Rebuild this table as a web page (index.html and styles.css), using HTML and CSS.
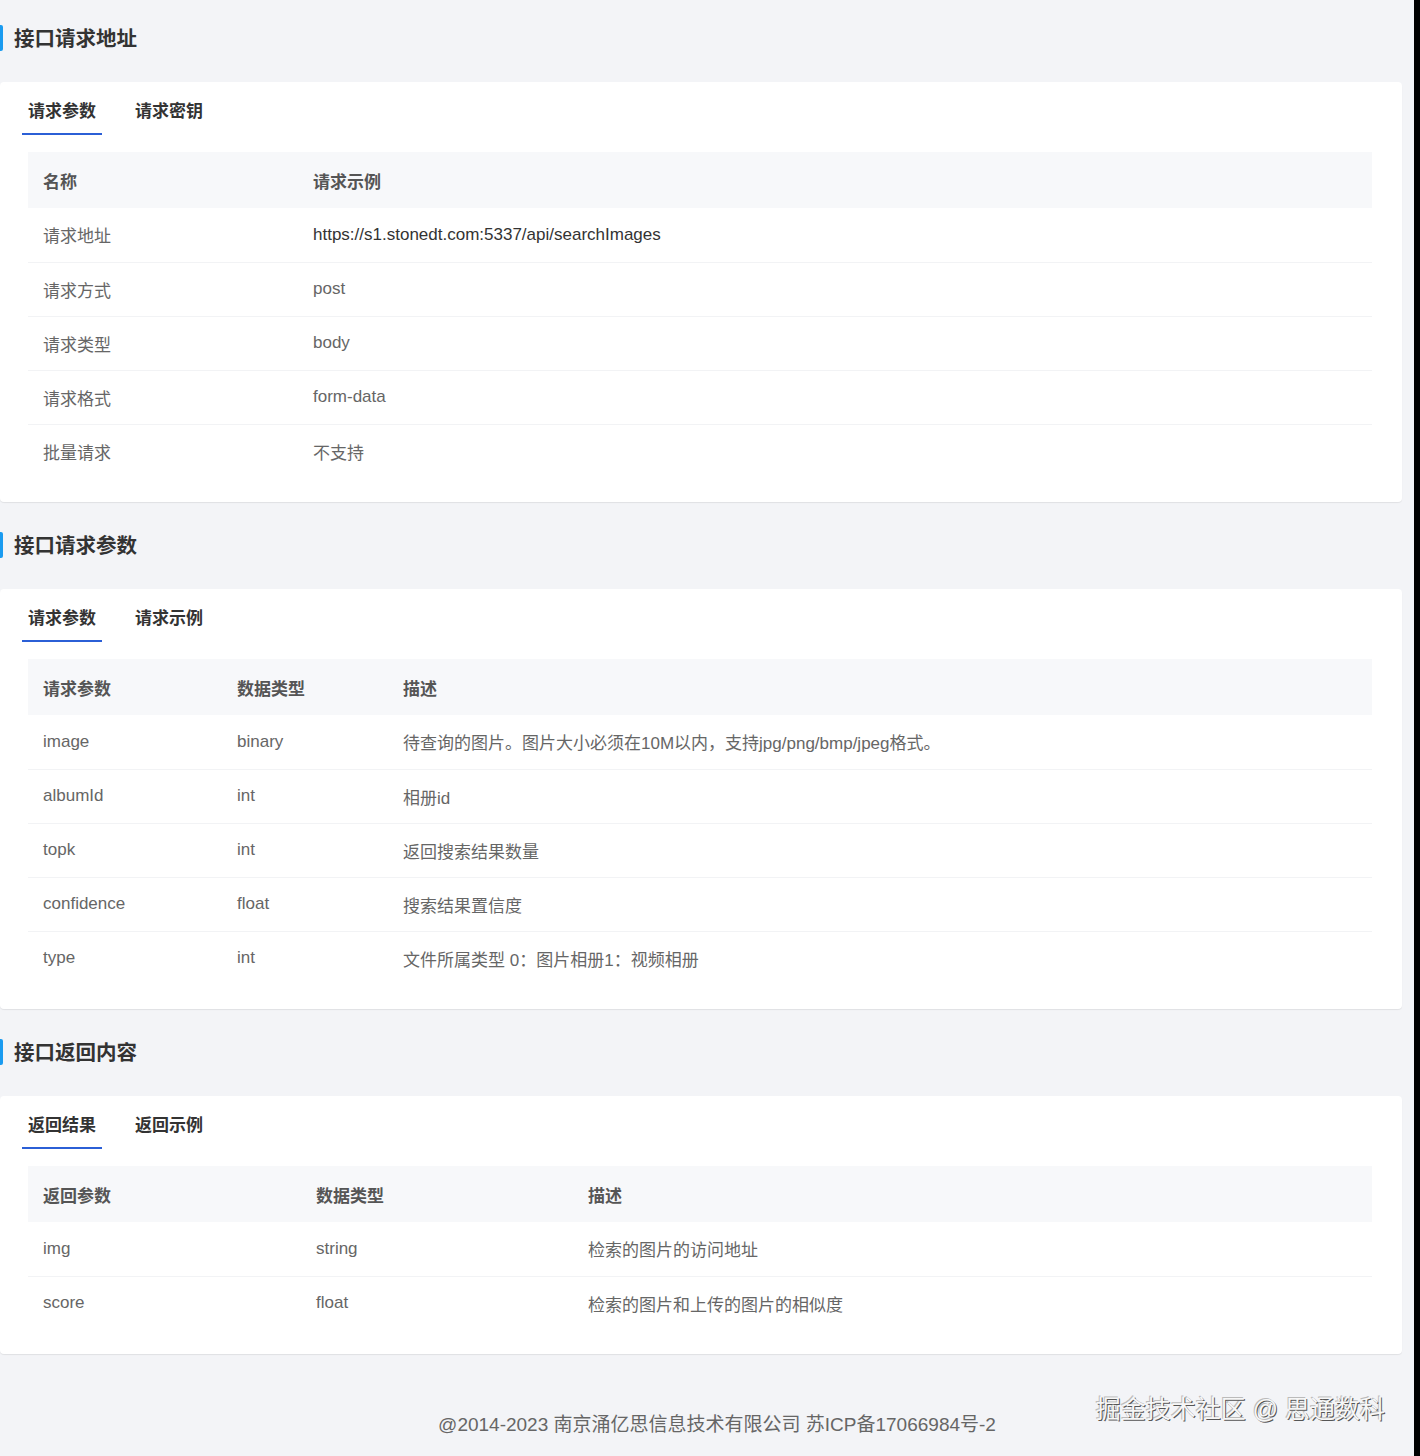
FILE: index.html
```html
<!DOCTYPE html>
<html lang="zh-CN">
<head>
    <meta charset="utf-8">
    <title>接口文档</title>
    <link rel="stylesheet" href="styles.css">
</head>
<body>
    <main class="page">
        <section class="block">
            <h2 class="block-title">接口请求地址</h2>
            <div class="card">
                <div class="tabs">
                    <span class="tab active">请求参数</span>
                    <span class="tab">请求密钥</span>
                </div>
                <table class="table t-addr">
                    <thead>
                        <tr><th>名称</th><th>请求示例</th></tr>
                    </thead>
                    <tbody>
                        <tr><td>请求地址</td><td class="strong">https://s1.stonedt.com:5337/api/searchImages</td></tr>
                        <tr><td>请求方式</td><td>post</td></tr>
                        <tr><td>请求类型</td><td>body</td></tr>
                        <tr><td>请求格式</td><td>form-data</td></tr>
                        <tr><td>批量请求</td><td>不支持</td></tr>
                    </tbody>
                </table>
            </div>
        </section>

        <section class="block">
            <h2 class="block-title">接口请求参数</h2>
            <div class="card">
                <div class="tabs">
                    <span class="tab active">请求参数</span>
                    <span class="tab">请求示例</span>
                </div>
                <table class="table t-params">
                    <thead>
                        <tr><th>请求参数</th><th>数据类型</th><th>描述</th></tr>
                    </thead>
                    <tbody>
                        <tr><td>image</td><td>binary</td><td>待查询的图片。图片大小必须在10M以内，支持jpg/png/bmp/jpeg格式。</td></tr>
                        <tr><td>albumId</td><td>int</td><td>相册id</td></tr>
                        <tr><td>topk</td><td>int</td><td>返回搜索结果数量</td></tr>
                        <tr><td>confidence</td><td>float</td><td>搜索结果置信度</td></tr>
                        <tr><td>type</td><td>int</td><td>文件所属类型 0：图片相册1：视频相册</td></tr>
                    </tbody>
                </table>
            </div>
        </section>

        <section class="block">
            <h2 class="block-title">接口返回内容</h2>
            <div class="card">
                <div class="tabs">
                    <span class="tab active">返回结果</span>
                    <span class="tab">返回示例</span>
                </div>
                <table class="table t-result">
                    <thead>
                        <tr><th>返回参数</th><th>数据类型</th><th>描述</th></tr>
                    </thead>
                    <tbody>
                        <tr><td>img</td><td>string</td><td>检索的图片的访问地址</td></tr>
                        <tr><td>score</td><td>float</td><td>检索的图片和上传的图片的相似度</td></tr>
                    </tbody>
                </table>
            </div>
        </section>

        <footer class="footer">
            <span>@2014-2023 南京涌亿思信息技术有限公司 苏ICP备17066984号-2</span>
            <span class="mark">掘金技术社区 @ 思通数科</span>
        </footer>
    </main>
</body>
</html>
```

FILE: styles.css
```css
* {
    margin: 0;
    padding: 0;
    box-sizing: border-box;
}
html {
    background: #000;
}
body {
    margin: 0 6px 0 0;
    background: #f3f4f7;
    font-family: "Liberation Sans", "Noto Sans CJK SC", sans-serif;
    color: #666;
    font-size: 17px;
}
.page {
    position: relative;
}
.block-title {
    position: relative;
    height: 82px;
    padding: 27px 0 0 14px;
    font-size: 20.5px;
    line-height: 24px;
    font-weight: 700;
    color: #333;
}
.block-title::before {
    content: '';
    position: absolute;
    left: 0;
    top: 25px;
    width: 3px;
    height: 26px;
    background: #1a9bf0;
    border-radius: 0 2px 2px 0;
}
.card {
    background: #fff;
    border-radius: 4px;
    box-shadow: 0 1px 1px rgba(0, 0, 0, 0.08);
    padding: 19px 30px 24px 28px;
    margin: 0 12px 5px 0;
}
.tabs {
    display: flex;
    gap: 27px;
    margin: 0 0 17px -6px;
}
.tab {
    padding: 0 6px 10px;
    font-size: 17px;
    line-height: 22px;
    font-weight: 700;
    color: #333;
    border-bottom: 2px solid transparent;
}
.tab.active {
    border-bottom-color: #2b5fd6;
}
.table {
    width: 100%;
    border-collapse: collapse;
    table-layout: fixed;
}
.table th {
    background: #f7f8fa;
    height: 56px;
    padding: 0 15px;
    text-align: left;
    font-weight: 700;
    color: #555;
}
.table td {
    height: 54px;
    padding: 0 15px;
    border-bottom: 1px solid #f2f3f5;
    color: #666;
}
.table tbody tr:last-child td {
    border-bottom: none;
}
.table td.strong {
    color: #333;
}
.t-addr th:first-child {
    width: 270px;
}
.t-params th:nth-child(1) {
    width: 194px;
}
.t-params th:nth-child(2) {
    width: 166px;
}
.t-result th:nth-child(1) {
    width: 273px;
}
.t-result th:nth-child(2) {
    width: 272px;
}
.footer {
    height: 100px;
    padding: 54px 0 0 20px;
    text-align: center;
    font-size: 19px;
    line-height: 24px;
    color: #666;
}
.mark {
    position: absolute;
    right: 29px;
    bottom: 35px;
    font-size: 25px;
    line-height: 30px;
    color: #f7f7f7;
    text-shadow: 1px 1px 0 #555, -1px -1px 0 #bbb;
}
```
